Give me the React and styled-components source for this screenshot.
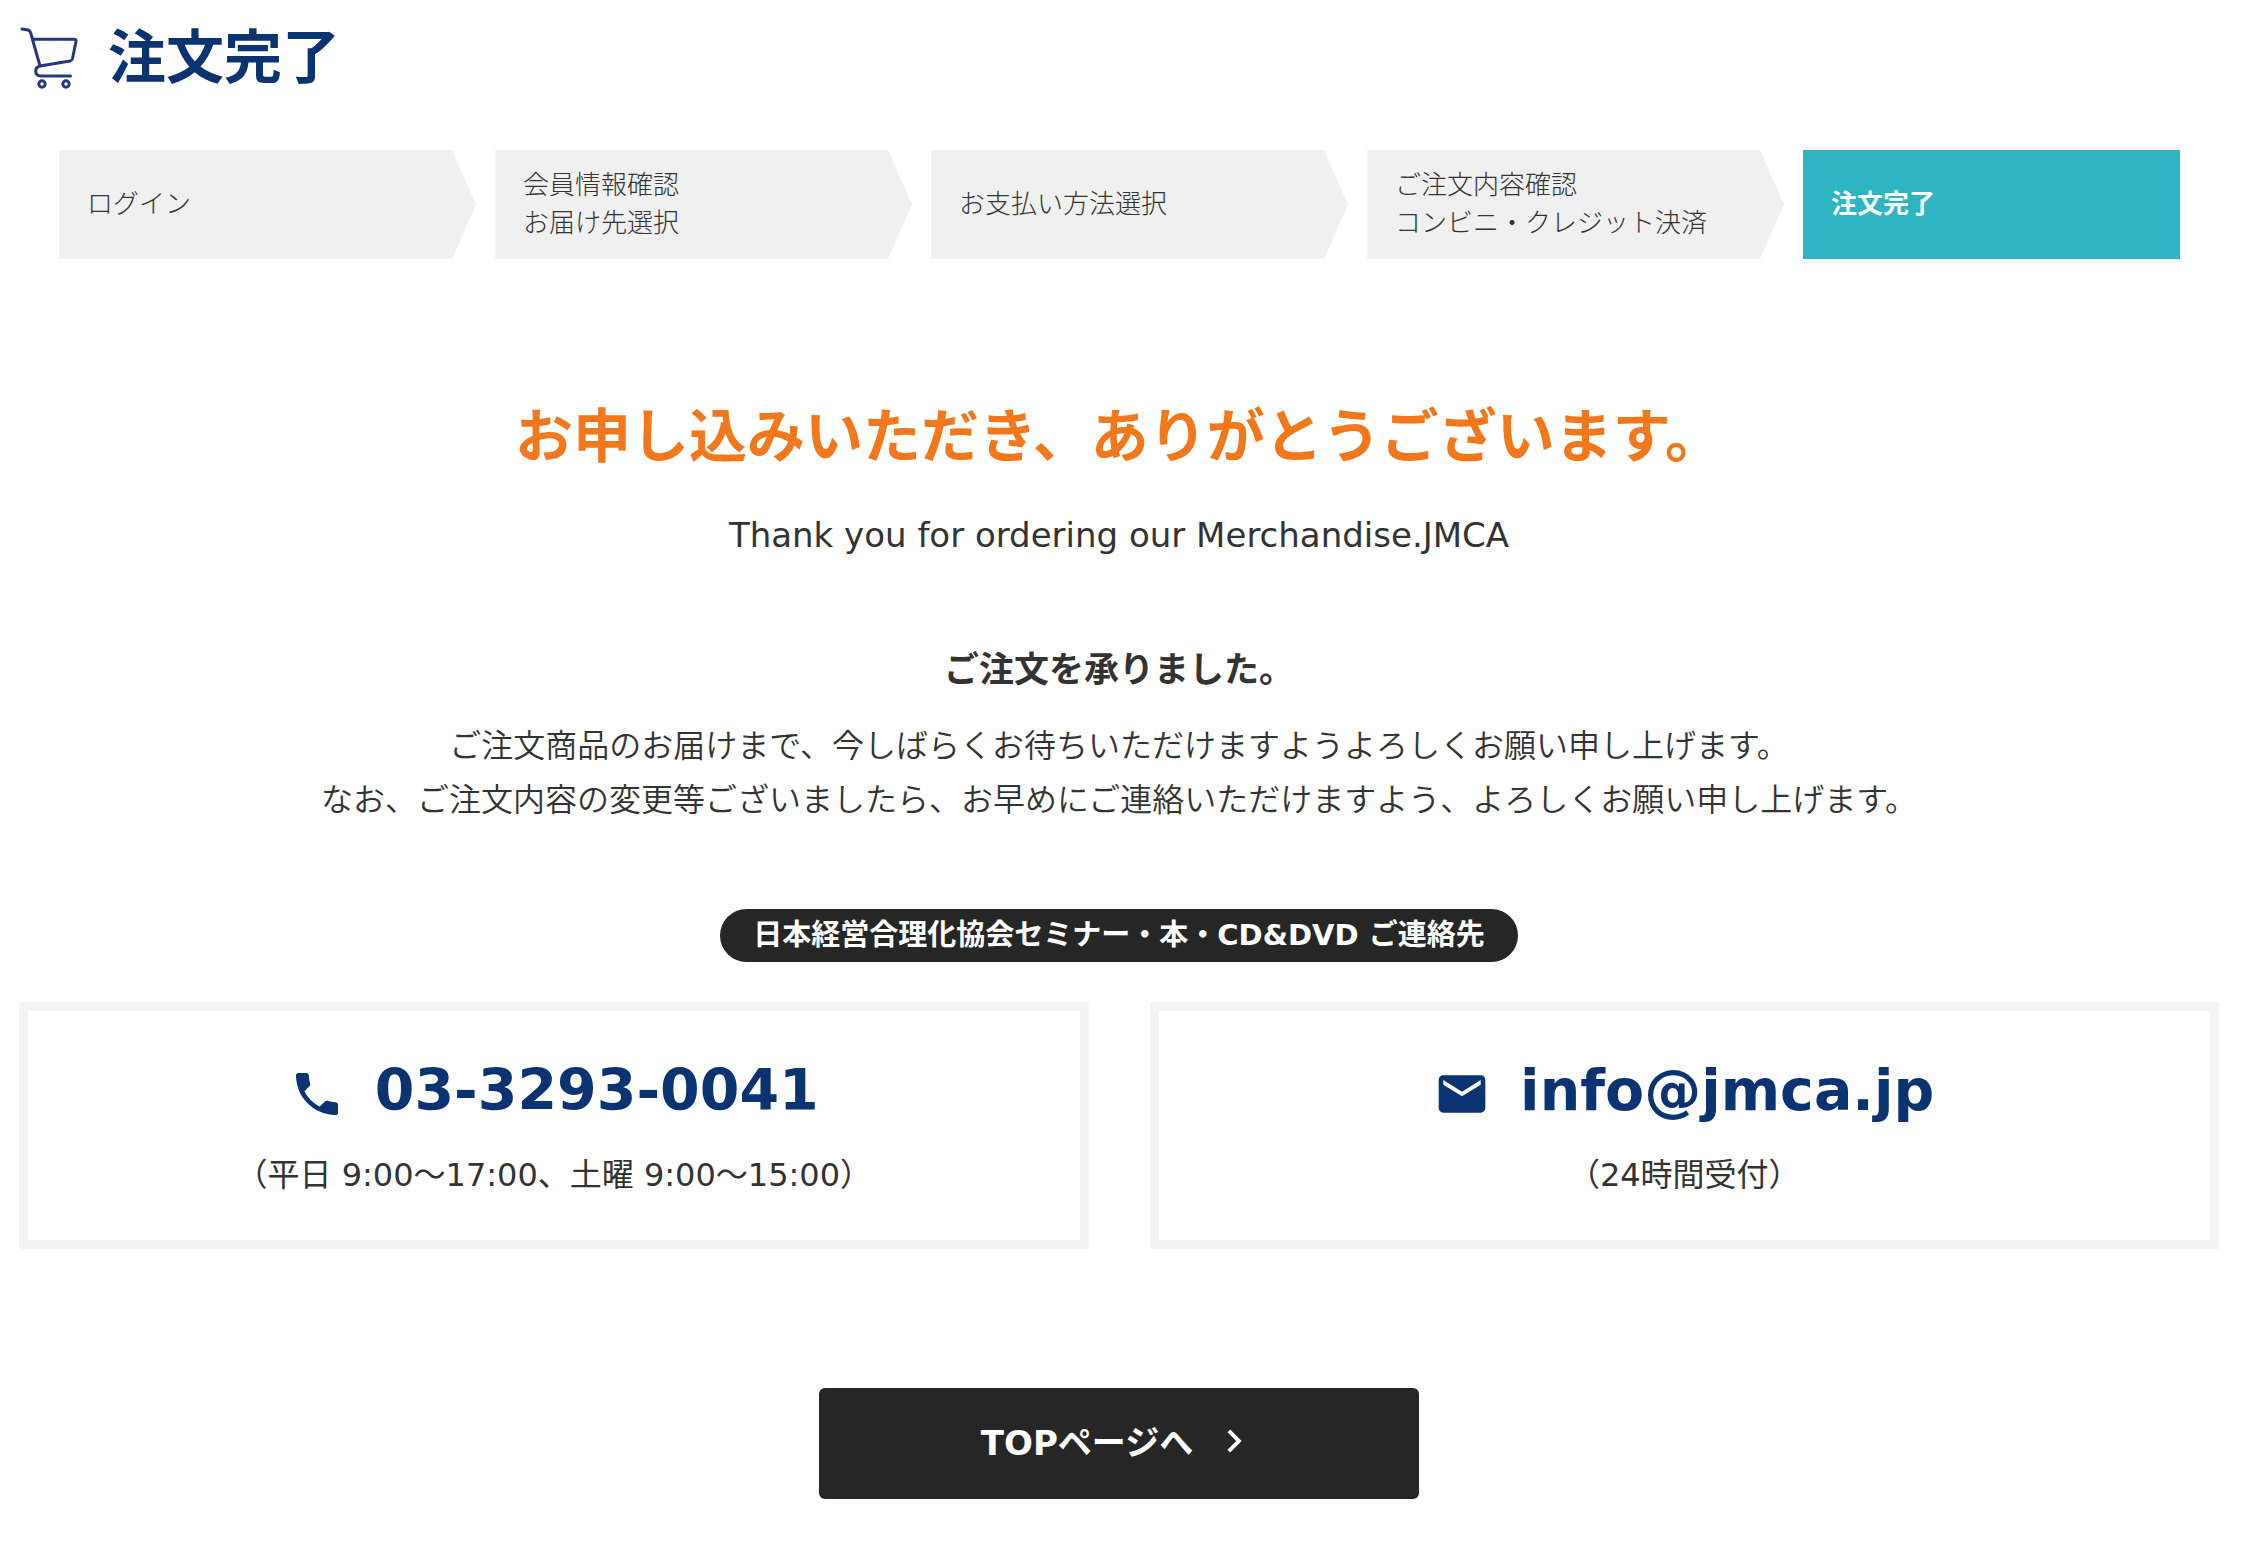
import React from 'react';
import styled, { createGlobalStyle } from 'styled-components';
import { MdPhone, MdEmail, MdChevronRight } from 'react-icons/md';

const GlobalStyle = createGlobalStyle`
    body {
        margin: 0;
        background-color: #fff;
        color: #333;
        font-family: 'DejaVu Sans', 'Noto Sans CJK JP', sans-serif;
    }

    h1, h2, h3, p, ol {
        margin: 0;
        padding: 0;
    }
`;

const Page = styled.main`
    padding: 22px 24px 48px 19px;
`;

const PageHeader = styled.header`
    display: flex;
    align-items: center;
    gap: 28px;
    height: 72px;
`;

const PageTitle = styled.h1`
    color: #0b3271;
    font-size: 58px;
    line-height: 72px;
`;

const StepList = styled.ol`
    display: grid;
    grid-template-columns: repeat(5, 1fr);
    gap: 59px;
    margin: 56px 39px 0 40px;
    list-style: none;
`;

const StepItem = styled.li`
    box-sizing: border-box;
    display: flex;
    align-items: center;
    min-height: 109px;
    padding: 0 28px 2px;
    font-size: 26px;
    font-weight: 300;
    line-height: 38px;
    white-space: pre-line;
    background-color: #f0f0f0;

    &:not(:last-child) {
        margin-right: -40px;
        clip-path: polygon(0 0, calc(100% - 24px) 0, 100% 50%, calc(100% - 24px) 100%, 0 100%);
    }

    &[aria-current] {
        color: #fff;
        font-weight: 700;
        background-color: #2db5c1;
    }
`;

const Message = styled.section`
    display: flex;
    flex-direction: column;
    align-items: center;
    margin-top: 142px;
    text-align: center;
`;

const ThanksTitle = styled.h2`
    color: #f3771b;
    font-size: 58px;
    line-height: 72px;
`;

const ThanksSub = styled.p`
    margin-top: 38px;
    font-size: 34px;
    line-height: 48px;
`;

const AcceptedTitle = styled.h3`
    margin-top: 87px;
    font-size: 35px;
    line-height: 48px;
`;

const AcceptedText = styled.p`
    margin-top: 22px;
    font-family: 'Noto Sans CJK JP', sans-serif;
    font-size: 32px;
    font-weight: 350;
    line-height: 54px;
`;

const ContactLabel = styled.h3`
    margin-top: 85px;
    padding: 0 33px;
    border-radius: 27px;
    color: #fff;
    font-size: 29px;
    line-height: 53px;
    background-color: #262626;
`;

const ContactGrid = styled.section`
    display: grid;
    grid-template-columns: 1fr 1fr;
    gap: 61px;
    margin-top: 40px;
`;

const ContactCard = styled.div`
    display: flex;
    flex-direction: column;
    align-items: center;
    padding: 43px 20px 38px;
    border: 9px solid #f4f4f4;
`;

const ContactLink = styled.a`
    display: flex;
    align-items: center;
    gap: 30px;
    color: #0b3271;
    font-size: 57px;
    font-weight: 700;
    line-height: 72px;
    text-decoration: none;

    svg {
        margin-top: 8px;
    }
`;

const ContactNote = styled.p`
    margin-top: 22px;
    font-size: 32px;
    line-height: 54px;
`;

const ButtonArea = styled.div`
    display: flex;
    justify-content: center;
    margin-top: 139px;
`;

const TopButton = styled.button`
    display: flex;
    align-items: center;
    justify-content: center;
    gap: 18px;
    width: 600px;
    height: 111px;
    padding: 0 0 6px;
    border: 0;
    border-radius: 6px;
    color: #fff;
    font-family: inherit;
    font-size: 34px;
    font-weight: 700;
    background-color: #262626;
    cursor: pointer;
`;

const steps = [
    'ログイン',
    '会員情報確認\nお届け先選択',
    'お支払い方法選択',
    'ご注文内容確認\nコンビニ・クレジット決済',
    '注文完了',
];

const contacts = [
    {
        href: 'tel:0332930041',
        label: '03-3293-0041',
        note: '（平日 9:00～17:00、土曜 9:00～15:00）',
        Icon: MdPhone,
    },
    { href: 'mailto:info@jmca.jp', label: 'info@jmca.jp', note: '（24時間受付）', Icon: MdEmail },
];

const CartIcon = () => (
    <svg
        width="61"
        height="64"
        viewBox="0 0 61 64"
        fill="none"
        stroke="#25397a"
        strokeWidth="3"
        strokeLinecap="round"
        strokeLinejoin="round"
        aria-hidden="true"
    >
        <path d="M3 3 L9 4 Q11 4.500 11.700 7 L21 40" />
        <path d="M14 13.300 H55 Q57.500 13.300 57 15.500 L53.500 32.500 Q53 34.500 51 35 L21 40 C15 41.500 15.500 50 21.500 50 H51.500" />
        <circle cx="23" cy="58" r="3.200" />
        <circle cx="47" cy="58" r="3.200" />
    </svg>
);

const Steps = () => (
    <StepList>
        {steps.map((step, index) => (
            <StepItem key={step} aria-current={index === steps.length - 1 ? 'step' : undefined}>
                {step}
            </StepItem>
        ))}
    </StepList>
);

const Contacts = () => (
    <ContactGrid>
        {contacts.map(({ href, label, note, Icon }) => (
            <ContactCard key={href}>
                <ContactLink href={href}>
                    <Icon size={56} aria-hidden="true" />
                    {label}
                </ContactLink>
                <ContactNote>{note}</ContactNote>
            </ContactCard>
        ))}
    </ContactGrid>
);

const App = () => (
    <>
        <GlobalStyle />
        <Page lang="ja">
            <PageHeader>
                <CartIcon />
                <PageTitle>注文完了</PageTitle>
            </PageHeader>
            <Steps />
            <Message>
                <ThanksTitle>お申し込みいただき、ありがとうございます。</ThanksTitle>
                <ThanksSub>Thank you for ordering our Merchandise.JMCA</ThanksSub>
                <AcceptedTitle>ご注文を承りました。</AcceptedTitle>
                <AcceptedText>
                    ご注文商品のお届けまで、今しばらくお待ちいただけますようよろしくお願い申し上げます。
                    <br />
                    なお、ご注文内容の変更等ございましたら、お早めにご連絡いただけますよう、よろしくお願い申し上げます。
                </AcceptedText>
                <ContactLabel>日本経営合理化協会セミナー・本・CD&amp;DVD ご連絡先</ContactLabel>
            </Message>
            <Contacts />
            <ButtonArea>
                <TopButton type="button">
                    TOPページへ
                    <MdChevronRight size={46} aria-hidden="true" />
                </TopButton>
            </ButtonArea>
        </Page>
    </>
);

export default App;
